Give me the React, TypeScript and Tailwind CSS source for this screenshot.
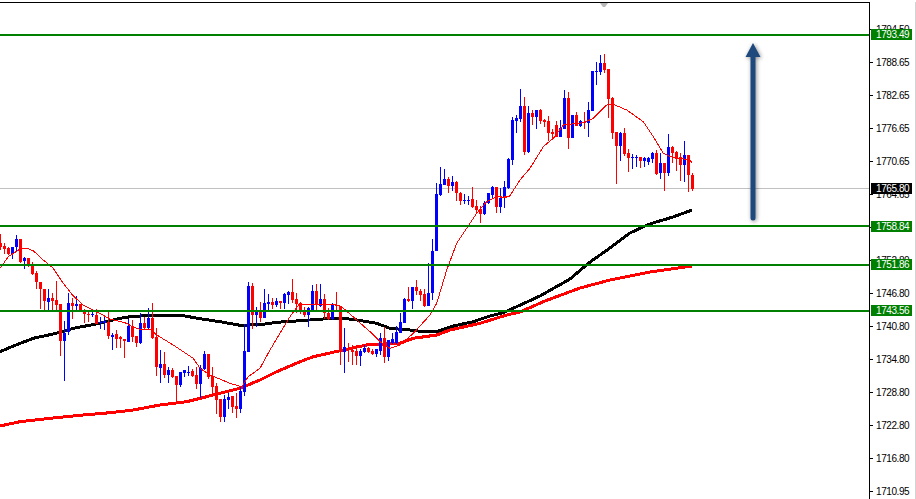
const candles: [string, number, number, number, number][] = [
  ['r',234,243,247,250],['r',243,246,249,254],['r',247,248,254,255],['b',247,247,254,259],['b',235,239,247,252],
  ['r',239,239,262,263],['b',257,258,261,269],['r',258,258,266,267],['r',262,264,274,275],['r',271,273,282,289],
  ['r',282,282,289,309],['r',289,289,301,310],['b',289,298,302,310],['r',293,298,301,311],['r',281,300,305,310],
  ['r',304,304,341,356],['b',321,333,341,381],['b',293,303,332,335],['r',298,303,306,319],['b',296,304,306,310],
  ['r',304,304,311,311],['r',309,310,314,323],['r',310,314,315,322],['b',311,314,315,317],['r',309,315,324,324],
  ['b',317,322,323,329],['b',316,321,323,330],['r',312,322,336,339],['b',333,335,337,350],['r',330,334,339,348],
  ['r',336,337,339,348],['r',339,339,341,358],['b',319,326,342,342],['r',320,326,337,342],['r',336,336,343,347],
  ['b',313,323,343,344],['r',317,323,328,330],['b',308,318,328,330],['r',303,318,338,339],['r',328,337,367,376],
  ['b',350,364,368,383],['r',352,364,375,378],['b',367,370,375,383],['r',368,370,377,378],['r',376,376,385,403],
  ['b',372,372,385,387],['b',370,370,373,377],['b',366,372,373,376],['r',369,371,376,377],['r',367,375,384,389],
  ['b',365,368,384,398],['b',351,354,369,370],['r',354,354,377,379],['r',367,376,387,396],['r',383,386,400,414],
  ['r',399,399,417,422],['b',395,399,417,422],['b',393,397,400,409],['r',396,396,407,413],['r',393,406,409,418],
  ['b',386,391,409,413],['b',324,351,392,396],['b',282,286,352,352],['r',283,286,315,329],['b',307,311,315,327],
  ['r',302,311,318,322],['b',289,303,318,318],['b',294,302,304,310],['r',298,302,305,309],['b',298,301,305,307],
  ['r',301,301,303,309],['b',293,294,303,309],['b',291,292,295,304],['r',279,292,300,303],['r',293,299,304,313],
  ['r',303,303,311,314],['r',307,310,315,317],['b',307,308,315,327],['b',285,291,311,312],['r',284,291,305,311],
  ['b',284,299,306,307],['r',294,299,313,319],['r',308,313,319,320],['b',303,305,319,320],['r',292,305,306,311],
  ['r',306,306,350,365],['b',328,347,352,373],['r',343,348,350,362],['r',345,350,352,365],['r',345,351,356,365],
  ['b',349,351,356,366],['b',345,348,352,353],['r',347,348,352,353],['r',349,351,354,355],['b',349,349,354,357],
  ['b',333,338,351,355],['r',327,338,357,363],['b',340,340,357,361],['b',333,339,343,344],['b',326,332,343,344],
  ['b',313,322,333,333],['b',298,299,323,323],['r',287,299,301,302],['b',287,287,301,309],['r',280,287,291,295],
  ['r',289,291,295,301],['r',289,294,306,307],['b',263,293,306,306],['b',239,251,293,300],['b',183,194,251,251],
  ['b',167,184,195,196],['b',169,179,185,185],['r',177,179,186,193],['b',176,182,186,191],['r',181,182,193,201],
  ['r',192,193,201,205],['b',194,200,201,204],['b',196,200,201,205],['r',187,199,207,208],['r',200,206,210,213],
  ['r',206,209,214,223],['b',201,203,214,215],['b',193,193,203,204],['b',186,187,195,199],['r',187,187,207,213],
  ['b',188,198,207,213],['b',181,187,198,208],['b',158,159,188,189],['b',117,120,160,165],['b',115,118,121,133],
  ['b',89,106,119,122],['r',97,106,152,155],['b',106,113,152,153],['r',110,113,117,125],['b',110,110,117,129],
  ['r',109,110,121,124],['r',119,120,122,127],['r',116,121,133,141],['r',129,132,134,140],['r',121,125,137,137],
  ['b',120,128,137,137],['b',90,98,129,129],['r',92,98,138,149],['b',115,115,138,138],['r',112,115,126,126],
  ['b',120,121,126,127],['r',112,122,123,129],['b',102,110,123,137],['b',71,71,111,111],['b',62,71,72,85],
  ['b',55,63,72,75],['r',54,63,70,73],['r',69,69,99,118],['r',97,98,133,139],['r',132,132,146,184],
  ['b',132,133,146,161],['r',128,133,154,156],['r',149,153,158,172],['b',154,157,158,169],['b',155,157,158,167],
  ['r',157,157,161,168],['b',157,158,161,167],['b',157,158,162,165],['b',152,153,159,163],['r',150,153,174,175],
  ['b',153,163,173,179],['r',163,163,173,191],['b',134,147,173,176],['r',146,147,153,163],['r',151,152,159,171],
  ['r',153,157,165,181],['b',141,155,165,182],['r',155,155,175,192],['r',173,175,189,191],
]

const toPts = (pts: number[][], ox: number, oy: number) =>
  pts.map(([x, y]) => `${(ox + x / 3).toFixed(1)},${(oy + y / 3).toFixed(1)}`).join(' ')

const thinMa = [
  toPts([[0,145],[25,110],[60,87],[80,85],[100,92],[130,120],[160,145],[190,190],[220,228],[250,255],[290,275],[330,297],[380,310],[400,322],[420,328],[455,330],[470,345],[520,375],[580,415],[600,445],[630,465],[690,490],[725,500],[745,470],[780,445],[810,390],[840,340],[870,290],[900,250]], 0, 220),
  toPts([[0,435],[30,432],[100,432],[125,440],[170,480],[210,515],[240,545],[270,565],[300,555],[340,520],[390,465],[410,430],[440,330],[470,250],[500,205],[530,160],[560,125],[590,110],[620,112]], 300, 160),
  toPts([[0,472],[28,470],[60,420],[90,385],[130,320],[160,295],[190,255],[250,248],[280,235],[320,195],[340,193],[380,210],[430,245],[460,290],[490,340],[510,350],[570,360],[575,368]], 500, 40),
].join(' ')

const blackMa = [
  toPts([[0,395],[40,378],[100,355],[160,342],[220,325],[300,310],[360,295],[400,289],[450,287],[550,287],[600,296],[660,305],[720,316],[780,314],[830,307]], 0, 220),
  toPts([[0,482],[70,477],[130,475],[170,480],[230,490],[270,505],[330,510],[370,515],[410,515],[460,498],[520,485],[570,468],[610,458]], 300, 160),
  '516,307 540,296 570,279 590,262 610,248 630,233 645,226 653,223 673,217 692,210',
].join(' ')

const redMa = [
  toPts([[0,618],[60,605],[150,595],[250,585],[330,578],[400,570],[480,555],[560,545],[640,525],[720,505],[780,480],[830,455]], 0, 220),
  toPts([[0,605],[40,590],[130,570],[200,555],[300,550],[340,535],[410,525],[450,510],[540,490],[620,465]], 300, 160),
  '520,312 545,301 580,288 610,280 650,272 692,266',
].join(' ')

const levels = [34, 225, 264, 310]

const axisLabels: [string, number][] = [
  ['1794.50',29],['1788.65',62],['1782.65',95],['1776.65',128],['1770.65',161],['1764.65',194],['1758.80',227],
  ['1752.80',260],['1746.80',293],['1740.80',326],['1734.80',359],['1728.80',392],['1722.80',425],['1716.80',458],['1710.95',491],
]

const tags: [string, number, boolean][] = [
  ['1793.49',29,false],['1765.80',183,true],['1758.84',221,false],['1751.86',259,false],['1743.56',305,false],
]

function Chart() {
  return (
    <svg width={869} height={496} viewBox="0 3 869 496" className="block shrink-0">
      <polyline points={blackMa} fill="none" stroke="#000000" strokeWidth={3} shapeRendering="crispEdges" />
      <polyline points={redMa} fill="none" stroke="#ff0000" strokeWidth={3} shapeRendering="crispEdges" />
      <rect x={0} y={188} width={869} height={1} fill="#c0c0c0" />
      {candles.map(([c, wt, bt, bb, wb], i) => {
        const color = c === 'r' ? '#ff0000' : '#0000ff'
        return (
          <g key={i} fill={color} shapeRendering="crispEdges">
            <rect x={i * 4} y={wt} width={1} height={wb - wt} />
            <rect x={i * 4 - 1} y={bt} width={3} height={Math.max(bb - bt, 1)} />
          </g>
        )
      })}
      <polyline points={thinMa} fill="none" stroke="#ff0000" strokeWidth={1} shapeRendering="crispEdges" />
      {levels.map((y) => (
        <rect key={y} x={0} y={y} width={869} height={2} fill="#008000" />
      ))}
      <path d="M600 3h8l-3 4h-2z" fill="#b8b8b8" />
      <g className="drop-shadow-[1px_1px_2px_rgba(0,0,0,0.45)]">
        <path d="M753 43l7.5 14h-5v161a2.5 2.5 0 0 1-5 0v-161h-5z" fill="#1f497d" />
      </g>
    </svg>
  )
}

export default function App() {
  return (
    <div className="w-[916px] h-[499px] bg-white overflow-hidden pt-[2px] font-['Liberation_Sans',Arial,sans-serif]">
      <div className="flex h-[497px]">
        <div className="w-[869px] shrink-0 border-t border-black">
          <Chart />
        </div>
        <div className="relative w-[46px] shrink-0 border-l border-black text-[10px] leading-[12px] tracking-[-0.42px] text-black">
          {axisLabels.map(([label, y]) => (
            <div key={label} className="absolute left-0 h-[12px] flex items-center" style={{ top: y - 8 }}>
              <span className="w-[3px] h-[1px] bg-black" />
              <span className="ml-[3px] pt-[2px]">{label}</span>
            </div>
          ))}
          {tags.map(([label, y, dark]) => (
            <div
              key={label}
              className={`absolute left-[1px] w-[41px] h-[11px] pl-[5px] text-white ${dark ? 'bg-black' : 'bg-[#008000]'}`}
              style={{ top: y - 2 }}
            >
              {label}
            </div>
          ))}
        </div>
        <div className="w-[1px] bg-[#d4d4d4]" />
      </div>
    </div>
  )
}
